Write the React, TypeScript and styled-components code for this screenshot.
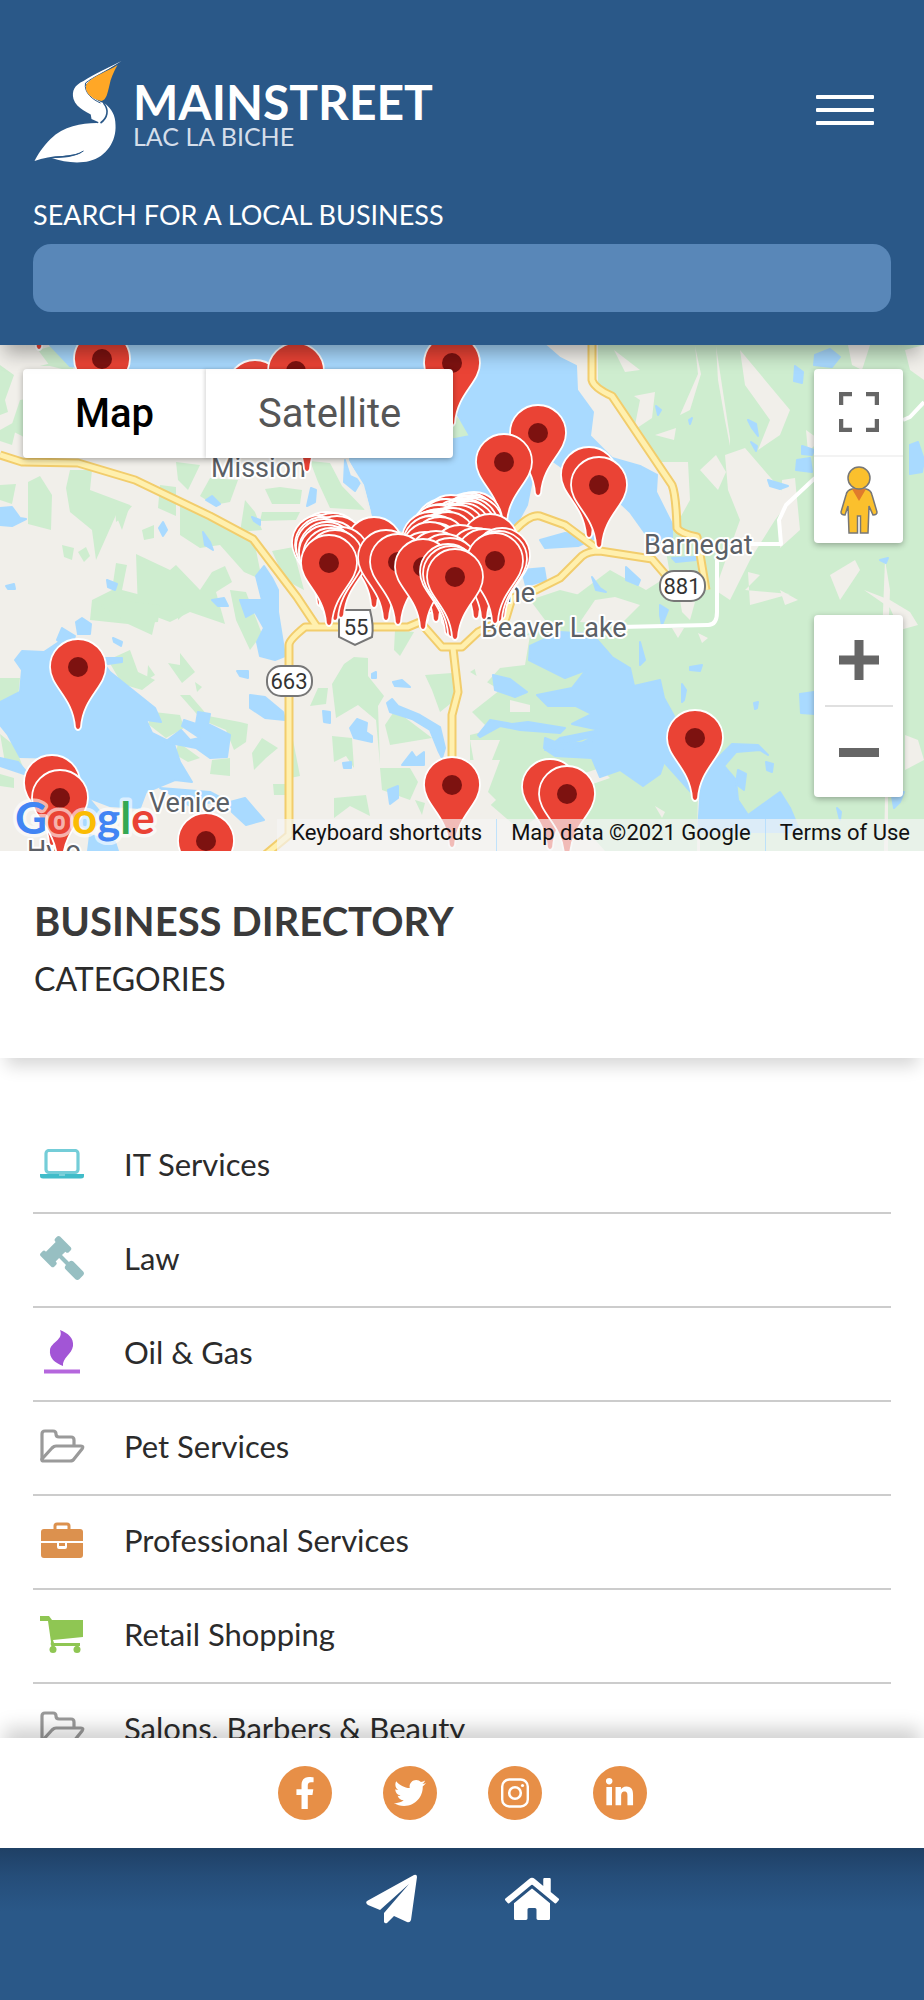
import React from "react";
import styled, { createGlobalStyle } from "styled-components";
import { FaFacebookF, FaGavel, FaHome, FaLinkedinIn, FaTwitter } from "react-icons/fa";

const colors = {
  navy: "#2a5888",
  field: "#5987b8",
  orange: "#e78f47",
  ink: "#2b2b2b",
  heading: "#3a3a3a",
  rule: "#cccccc",
};

const GlobalStyle = createGlobalStyle`
  *, *::before, *::after { box-sizing: border-box; }
  body { margin: 0; background: #ffffff; font-family: Lato, "Liberation Sans", sans-serif; color: ${colors.ink}; }
  button { font: inherit; color: inherit; border: 0; padding: 0; background: none; cursor: pointer; }
  a { color: inherit; text-decoration: none; }
`;

const Page = styled.div`
  height: 100vh;
  display: flex;
  flex-direction: column;
  overflow: hidden;
`;

/* ---------- header ---------- */

const Header = styled.header`
  position: relative;
  z-index: 2;
  flex: none;
  padding: 60px 33px 33px;
  background: ${colors.navy};
  box-shadow: 0 12px 18px -4px rgba(0, 0, 0, 0.32);
`;

const TopBar = styled.div`
  display: flex;
  align-items: flex-start;
  justify-content: space-between;
`;

const Brand = styled.a`
  display: flex;
  gap: 9px;
  color: #ffffff;
`;

const BrandText = styled.span`
  display: flex;
  flex-direction: column;
  padding-top: 18px;
`;

const BrandName = styled.span`
  font-size: 48px;
  line-height: 48px;
  font-weight: 700;
`;

const BrandPlace = styled.span`
  font-size: 25px;
  line-height: 20px;
  color: #d5deea;
`;

const MenuButton = styled.button`
  display: flex;
  flex-direction: column;
  gap: 9px;
  width: 58px;
  margin: 35px 17px 0 0;
`;

const MenuLine = styled.span`
  height: 4px;
  border-radius: 1px;
  background: #ffffff;
`;

const SearchLabel = styled.label`
  display: block;
  margin: 34px 0 12px;
  font-size: 27px;
  line-height: 34px;
  color: #ffffff;
`;

const SearchInput = styled.input`
  display: block;
  width: 100%;
  height: 68px;
  padding: 0 20px;
  border: 0;
  border-radius: 18px;
  background: ${colors.field};
  color: #ffffff;
  font: inherit;
  font-size: 27px;
`;

/* ---------- map ---------- */

const MapSection = styled.section`
  position: relative;
  flex: none;
  height: 506px;
  overflow: hidden;
  font-family: Roboto, "Liberation Sans", sans-serif;
`;

const MapCanvas = styled.svg`
  display: block;
  width: 100%;
  height: 100%;
`;

const MapTypes = styled.div`
  position: absolute;
  top: 24px;
  left: 23px;
  display: flex;
  height: 89px;
  border-radius: 4px;
  background: #ffffff;
  box-shadow: 0 2px 6px rgba(0, 0, 0, 0.3);
`;

const MapType = styled.button<{ $active?: boolean }>`
  padding: 0 52px;
  font-size: 40px;
  font-weight: ${(p) => (p.$active ? 500 : 400)};
  color: ${(p) => (p.$active ? "#000000" : "#565656")};
  & + & { box-shadow: -2px 0 3px rgba(0, 0, 0, 0.12); }
`;

const Controls = styled.div`
  position: absolute;
  top: 24px;
  right: 21px;
  display: flex;
  flex-direction: column;
  gap: 72px;
`;

const ControlGroup = styled.div`
  display: flex;
  flex-direction: column;
  align-items: center;
  width: 89px;
  border-radius: 4px;
  background: #ffffff;
  box-shadow: 0 2px 6px rgba(0, 0, 0, 0.3);
`;

const ControlButton = styled.button<{ $tall?: boolean }>`
  display: flex;
  align-items: center;
  justify-content: center;
  width: 100%;
  height: ${(p) => (p.$tall ? 90 : 86)}px;
`;

const ControlDivider = styled.span<{ $wide?: boolean }>`
  width: ${(p) => (p.$wide ? 89 : 68)}px;
  height: 2px;
  background: ${(p) => (p.$wide ? "#f3f3f3" : "#e0e0e0")};
`;

const Attribution = styled.div`
  position: absolute;
  right: 0;
  bottom: 0;
  display: flex;
  height: 32px;
  font-size: 22px;
  line-height: 28px;
  color: #111111;
`;

const AttributionItem = styled.span`
  display: flex;
  align-items: flex-start;
  padding: 0 14px;
  background: rgba(245, 245, 245, 0.68);
  white-space: nowrap;
  & + & { border-left: 1px solid rgba(169, 218, 255, 0.7); }
`;

/* ---------- directory ---------- */

const DirectoryHeading = styled.div`
  position: relative;
  z-index: 1;
  flex: none;
  padding: 44px 34px 59px;
  background: #ffffff;
  box-shadow: 0 14px 16px -6px rgba(0, 0, 0, 0.16);
`;

const Title = styled.h1`
  margin: 0;
  font-size: 40px;
  line-height: 52px;
  font-weight: 700;
  color: ${colors.heading};
`;

const Subtitle = styled.h2`
  margin: 12px 0 0;
  font-size: 32px;
  line-height: 40px;
  font-weight: 400;
`;

const Categories = styled.ul`
  flex: 1;
  min-height: 0;
  margin: 0;
  padding: 62px 33px 0;
  overflow-y: auto;
  scrollbar-width: none;
  list-style: none;
`;

const Category = styled.li`
  border-bottom: 2px solid ${colors.rule};
`;

const CategoryLink = styled.a`
  display: flex;
  align-items: center;
  gap: 34px;
  height: 92px;
  padding-bottom: 4px;
  font-size: 31px;
  line-height: 40px;
`;

const CategoryIcon = styled.span<{ $color: string }>`
  display: flex;
  justify-content: center;
  flex: none;
  width: 57px;
  color: ${(p) => p.$color};
`;

const MirroredGavel = styled(FaGavel)`
  transform: scaleX(-1);
`;

/* ---------- footer ---------- */

const Footer = styled.footer`
  position: relative;
  z-index: 1;
  flex: none;
`;

const SocialBar = styled.nav`
  display: flex;
  justify-content: center;
  gap: 51px;
  padding: 28px 0;
  background: #ffffff;
  box-shadow: 0 -14px 18px -4px rgba(0, 0, 0, 0.18);
`;

const SocialLink = styled.a`
  display: flex;
  align-items: center;
  justify-content: center;
  width: 54px;
  height: 54px;
  border-radius: 50%;
  background: ${colors.orange};
  color: #ffffff;
`;

const QuickBar = styled.nav`
  position: relative;
  display: flex;
  justify-content: center;
  gap: 84px;
  height: 152px;
  padding-top: 24px;
  background: linear-gradient(#1f4065, #254d79 28px, ${colors.navy} 64px);
  color: #ffffff;
`;

const QuickLink = styled.a`
  display: flex;
  align-items: center;
  width: 56px;
  height: 54px;
  justify-content: center;
`;

/* ---------- drawings ---------- */

const Pelican = () => (
  <svg width="91" height="104" viewBox="0 1 90 104" aria-hidden="true">
    <path
      fill="#ffffff"
      d="M88 2 C75 9 60 15 50 22 C41 26 38 32 40 40 C43 50 56 54 62 58 C66 61 66 65 63 64 C48 64 30 67 17 80 C9 88 4 96 1 102 C9 99 19 97 29 97 C38 96 44 95 49 93 C42 98 30 99 18 99 C30 103 44 105 56 102 C73 98 83 82 82 66 C82 56 78 50 72 45 C61 41 53 34 52 26 C60 18 73 12 88 2Z"
    />
    <path fill="#ffffff" d="M52 24 C51 34 60 41 67 44 C72 49 73 56 67 64 L58 60 Z" />
    <path fill="none" stroke={colors.navy} strokeWidth="1" d="M85 5 C73 12 60 18 52 24 C50 34 60 41 67 44" />
    <path fill="#ffa726" d="M84 6 C75 12 61 16 53 25 C50 33 58 40 68 42 C73 41 74 34 76 26 C77 20 80 13 84 6Z" />
    <path fill="none" stroke={colors.navy} strokeWidth="1.600" d="M70 44 C76 51 74 59 67 64" />
    <path fill="none" stroke={colors.navy} strokeWidth="1" d="M18 99 C30 97 40 98 50 92" />
  </svg>
);

const LaptopIcon = () => (
  <svg width="44" height="30" viewBox="0 0 44 30" aria-hidden="true">
    <rect x="6" y="1.500" width="32" height="22" rx="3" fill="none" stroke="#74cdd8" strokeWidth="3.200" />
    <path d="M0 25h44v2q0 2.500-3 2.500H3Q0 29.500 0 27Z" fill="#40bcc9" />
    <path d="M19 26h6" stroke="#b8e6eb" strokeWidth="1" />
  </svg>
);

const FlameIcon = () => (
  <svg width="38" height="44" viewBox="0 0 38 44" aria-hidden="true">
    <path
      fill="currentColor"
      d="M17 0 C25 3 31 8 30 16 C29 24 19 28 20 36 C12 33 6 28 7 20 C8 12 21 10 17 0Z"
    />
    <path d="M1 41.500h36" stroke="#b567dd" strokeWidth="4" />
  </svg>
);

const FolderIcon = () => (
  <svg width="46" height="34" viewBox="0 0 46 34" fill="none" stroke="currentColor" strokeWidth="3.200" strokeLinejoin="round" aria-hidden="true">
    <path d="M3 31V5q0-3 3-3h8q3 0 3 3t3 3h12q3 0 3 3v6" />
    <path d="M3 30 13 19q2-2 4-2h25q3 0 1 3l-8 10q-1 2-4 2H5q-3 0-2-2Z" />
  </svg>
);

const BriefcaseIcon = () => (
  <svg width="42" height="36" viewBox="0 0 42 36" aria-hidden="true">
    <path d="M14 8V4q0-2 2-2h10q2 0 2 2v4" fill="none" stroke="currentColor" strokeWidth="3" />
    <path d="M3 7h36q3 0 3 3v9H0v-9q0-3 3-3Z" fill="currentColor" />
    <path d="M0 21h16v4q0 2 2 2h6q2 0 2-2v-4h16v12q0 3-3 3H3q-3 0-3-3Z" fill="currentColor" />
    <path d="M18 21h6v3h-6Z" fill="currentColor" />
  </svg>
);

const CartIcon = () => (
  <svg width="44" height="37" viewBox="0 0 44 37" aria-hidden="true">
    <path d="M0 0h9l3 4h31v17L13 24l1 3h26v3H12q-2-1-1-4L8 5H0Z" fill="currentColor" />
    <circle cx="13" cy="33.500" r="3.500" fill="currentColor" />
    <circle cx="37" cy="33.500" r="3.500" fill="currentColor" />
    <path d="M13 27v5M37 28v5" stroke="currentColor" strokeWidth="3" />
  </svg>
);

const InstagramIcon = () => (
  <svg width="28" height="30" viewBox="0 0 28 30" fill="none" stroke="#ffffff" aria-hidden="true">
    <rect x="1.200" y="1.500" width="25.600" height="27" rx="7" strokeWidth="2.400" />
    <circle cx="14" cy="15" r="5.800" strokeWidth="2.600" />
    <circle cx="21.500" cy="7.500" r="1.600" fill="#ffffff" stroke="none" />
  </svg>
);

const PlaneIcon = () => (
  <svg width="52" height="50" viewBox="0 0 52 50" fill="#ffffff" aria-hidden="true">
    <path d="M1 27 48 1q3-1 3 2L45 46q-1 3-4 2L28 42l-7 7q-2 1-3-1V39L43 10 14 36 2 31q-3-2-1-4Z" />
  </svg>
);

const FullscreenIcon = () => (
  <svg width="40" height="40" viewBox="0 0 40 40" fill="none" stroke="#666666" strokeWidth="4.500" aria-hidden="true">
    <path d="M2 13V2h11M27 2h11v11M38 27v11H27M13 38H2V27" />
  </svg>
);

const PegmanIcon = () => (
  <svg width="38" height="68" viewBox="0 0 38 68" fill="#fbc02d" stroke="#777777" strokeWidth="1.500" aria-hidden="true">
    <path d="M12 23h14q5 1 6 6l5 17q0 3-4 3l-4-9-1 27H20.500V50h-3v17H9L8 40l-3 9q-4 0-4-3l5-17q1-5 6-6Z" />
    <path d="M12 23h14l-7 12Z" fill="#e07b2c" stroke="none" />
    <circle cx="19" cy="12" r="11" />
  </svg>
);

const PlusIcon = () => (
  <svg width="40" height="40" viewBox="0 0 40 40" aria-hidden="true">
    <path d="M15.500 0h9v15.500H40v9H24.500V40h-9V24.500H0v-9h15.500Z" fill="#666666" />
  </svg>
);

const MinusIcon = () => (
  <svg width="40" height="9" viewBox="0 0 40 9" aria-hidden="true">
    <path d="M0 0h40v9H0Z" fill="#666666" />
  </svg>
);

/* ---------- map data ---------- */

const WOODS = [
  "0,365 14,375 5,400 8,412 0,415", "38,350 52,346 70,352 74,372 50,366", "20,400 50,395 90,400 96,440 60,458 40,450 22,436 10,430",
  "0,430 18,420 12,445 0,441", "0,485 16,484 12,504 0,500", "28,482 40,476 52,495 51,530 28,524", "70,470 92,470 90,490 130,505 122,530 116,515 96,560 92,530 70,512 66,488",
  "115,502 132,506 124,516 116,522", "160,485 176,487 176,516 158,508", "176,462 200,465 188,490 178,480", "62,545 74,548 72,560 64,557",
  "78,552 86,547 90,556 84,562", "142,530 154,525 154,538 144,540", "116,563 127,565 122,590 160,600 152,635 128,624 90,620 92,600 112,590",
  "136,554 170,570 176,565 200,590 212,572 225,566 232,582 216,592 225,624 190,612 170,622 138,610", "180,500 200,510 235,530 255,545 262,580 244,572 220,545 200,548 180,535",
  "262,512 300,512 296,520 260,521", "265,489 280,487 302,490 300,504 272,504", "210,478 238,480 230,502 214,505 200,496", "310,461 330,463 342,486 365,510 330,508 318,482",
  "245,500 255,512 262,530 240,532", "272,551 305,545 296,560 304,590 285,580", "230,590 246,592 262,634 250,650 236,620", "0,678 20,678 18,698 0,702",
  "0,734 15,746 24,770 40,778 6,768", "0,774 14,778 14,788 0,786", "100,605 118,600 160,605 158,622 130,624", "108,660 130,650 138,672 155,680 142,690 122,684",
  "178,600 186,612 178,620", "168,663 180,665 180,653 195,672 182,683", "148,665 155,675 147,680", "195,682 202,687 197,692", "180,695 190,695 208,716 240,722 248,724 246,742 234,750 226,730 202,720",
  "154,712 180,715 184,728 166,738 148,724", "178,742 200,758 188,762 176,755", "212,760 230,758 230,776 210,774", "252,753 262,738 278,748 266,758 254,770", "273,784 290,784 290,795 274,795",
  "293,740 300,776 290,778", "344,664 354,657 368,658 368,676 384,696 378,706 380,765 376,720 358,705 336,718 332,684", "318,688 328,688 326,704 310,706",
  "332,736 352,738 354,768 346,756 334,762", "334,798 366,795 370,816 350,806 334,818", "395,630 414,632 400,656 394,650", "425,675 452,673 455,700 440,712 432,690",
  "385,725 395,710 432,738 390,745", "380,768 410,768 418,782 410,800 382,790", "415,800 425,803 422,815", "120,345 133,350 120,366 40,366",
  "380,425 400,440 440,440 455,415 480,440 470,460 450,448 390,450", "500,345 512,350 493,356 488,376 482,365 495,350",
  "598,345 924,345 924,851 605,851 560,800 520,830 485,800 500,760 470,760 470,735 490,730 472,712 500,690 470,672 520,640 570,600 610,570 646,590 670,575 665,545 690,500 688,462 658,462 625,420 598,385",
  "530,600 560,590 600,600 640,620 690,640 650,680 560,640", "515,550 530,560 520,570",
];

const CLEARINGS = [
  "614,350 640,370 625,372", "634,396 655,392 652,418 634,430 640,400", "655,435 676,428 674,440", "695,346 698,374 680,415 690,410 701,374", "716,346 730,438 730,446 725,420 718,380",
  "725,455 745,448 790,500 775,520 750,560 730,600 715,590 740,520 728,490", "740,350 790,410 780,435 758,450 770,420 745,385", "806,430 820,440 808,452", "782,480 795,478 800,530 780,548",
  "700,470 716,455 726,472 718,490", "748,572 760,575 745,590 790,594 750,605", "848,345 870,345 862,370 852,365", "905,350 924,345 924,380 910,370", "885,560 890,590 886,690 880,690",
  "864,590 890,600 910,612 918,625 900,630 890,608", "830,575 855,560 860,570 840,600", "780,590 798,600 785,605", "680,600 695,602 690,620 682,612", "672,628 684,628 678,638", "698,633 708,638 702,643",
  "510,700 530,705 530,712 510,712", "470,740 500,740 490,765 475,768", "585,773 600,768 610,778 590,785", "655,806 665,812 662,818", "653,740 664,745 663,765 655,770", "905,735 918,740 924,760 905,770",
  "470,650 500,640 530,635 525,665 500,668 480,690", "476,780 496,800 480,815", "885,797 888,797 888,851 884,851", "698,785 700,785 700,851 697,851", "595,600 615,597 640,605 620,625 580,622",
];

const WATERS = [
  "50,345 545,345 560,358 576,366 577,390 593,412 590,436 612,458 640,466 657,475 656,492 672,524 672,545 650,540 630,512 612,495 585,485 560,466 540,452 532,480 527,505 515,527 470,560 400,530 373,516 366,490 350,460 352,438 455,439 470,436 455,410 300,420 170,380 70,366",
  "0,702 20,692 22,670 15,660 22,651 44,652 62,640 90,645 110,672 135,692 155,708 161,722 146,720 152,733 166,740 174,744 180,762 192,782 175,780 146,792 140,808 110,806 84,796 62,758 20,757 8,735 0,725",
  "181,730 190,740 200,738 182,726 184,720 196,724 198,712 210,714 208,724 230,735 227,757 210,758 196,748 165,742",
  "57,640 62,628 75,636 70,650", "76,622 82,618 91,624 90,634 78,634", "113,638 122,642 121,646 114,642", "100,658 122,658 122,662 108,664",
  "0,508 12,507 20,518 26,519 12,526 0,525", "6,586 14,584 15,589 8,589", "107,580 117,584 115,590 108,587", "159,528 163,522 167,530 163,536", "203,532 210,542 213,550 205,545", "206,500 212,496 220,504 216,506",
  "252,517 260,520 260,525 254,521", "311,488 316,490 315,502 307,506", "345,460 350,476 361,481 355,491 344,482", "240,600 262,600 256,576 264,566 272,578 278,590 278,612 285,656 275,660 260,656 257,642 264,628 255,612 246,617",
  "212,600 224,598 228,606 218,606", "237,671 248,671 248,678 240,676", "250,695 265,697 283,712 285,720 265,718 250,708", "323,711 330,712 330,723 324,722", "350,728 357,719 367,723 366,732 372,736 372,742 354,738",
  "387,703 392,699 398,706 420,715 440,727 445,748 442,758 438,750 430,730 412,719 390,712", "388,790 398,786 398,798 390,804", "402,765 412,752 416,758 424,752 424,765", "343,763 351,762 351,768 344,768",
  "230,802 245,798 264,820 246,825 232,812", "160,788 210,792 225,800 190,806", "0,758 18,762 30,776 0,766", "60,806 90,800 105,818 90,830 70,820", "90,835 115,842 118,851 88,851", "372,674 376,672 376,678 372,678", "393,682 402,680 410,687 395,686",
  "529,660 530,646 560,632 592,634 612,657 630,668 634,686 660,680 664,698 674,716 676,738 690,752 696,772 697,799 682,782 664,762 660,774 643,786 620,770 600,777 592,758 555,756 546,750 580,744 596,735 545,750 560,738 600,730 572,724 592,714 576,706 548,706 537,695 572,688 586,670 565,678",
  "700,800 698,780 716,760 732,744 758,745 768,755 760,750 736,752 724,766 736,780 738,800 748,815 780,792 790,808 800,832 698,832",
  "493,675 510,679 527,692 515,697 495,690", "478,735 490,720 512,724 528,722 565,728 560,733 520,730 500,726 480,737", "545,738 560,744 592,742 560,752 544,748", "640,642 645,660 640,665", "690,667 702,665 700,671 690,670", "682,684 686,690 684,700 682,702",
  "540,540 565,533 600,536 578,546 545,548", "522,570 544,568 546,580 526,586", "626,567 640,580 638,585 626,580", "672,558 696,557 696,560 676,562", "592,577 600,588 606,592 596,590", "660,605 668,610 662,625 660,615",
  "815,355 830,349 840,357 832,367 814,365", "795,366 803,372 802,383 794,381", "656,406 661,410 658,415", "689,420 692,418 690,424", "748,420 756,424 758,436 752,428", "751,442 757,446 756,451", "802,446 814,450 812,455 802,454", "797,460 810,458 812,472 796,470",
  "768,480 788,486 780,489 770,486", "910,445 918,442 924,460 922,472 910,474", "800,694 814,692 815,714 801,713", "880,560 888,558 886,563", "892,796 904,792 900,802 894,808", "738,770 746,774 744,790 736,784", "766,762 773,764 772,772 767,770",
  "754,703 758,702 757,708 755,709", "837,808 841,812 840,820",
];

const ROADS = [
  "M0 455 22 462 78 463 135 480 210 516 253 539 297 597 317 627",
  "M265 855 289 835 289 645Q289 640 305 627H408L420 622 442 647H462L478 632 506 618 512 598 536 590 560 578 582 556Q588 551 600 551L652 559 670 580",
  "M515 530Q530 514 540 516L565 525 600 551",
  "M592 345V380Q594 388 612 396L672 485Q676 495 677 528 680 533 697 537L701 560 706 590",
  "M453 648 458 692 452 715V790",
];

const SCATTERED_PINS = [
  [39, 287], [102, 359], [307, 409], [255, 388], [296, 371], [452, 363], [538, 433], [504, 462], [589, 475], [599, 485],
  [78, 667], [52, 783], [60, 798], [206, 841], [452, 785], [550, 787], [567, 794], [695, 738],
];

const DOWNTOWN_PINS = Array.from({ length: 34 }, (_, i) => {
  const x = 430 + ((i * 17) % 46);
  const lift = Math.round(((470 - x) * (470 - x)) / 70);
  return [x, 517 + lift + ((i * 11) % 17)];
}).sort((a, b) => a[1] - b[1]);

const FRONT_PINS = [
  [490, 542], [326, 540], [320, 543], [333, 541], [323, 545], [337, 544], [324, 547], [332, 549], [327, 550], [374, 545], [341, 555], [327, 553], [331, 556], [335, 558],
  [430, 550], [460, 553], [476, 556], [484, 557], [425, 560], [386, 558], [436, 559], [445, 562], [450, 566], [398, 562], [329, 563],
  [502, 556], [499, 559], [495, 561], [423, 567], [448, 572], [451, 574], [455, 577],
];

const PINS = [...SCATTERED_PINS, ...DOWNTOWN_PINS, ...FRONT_PINS];

const Pin = ({ x, y }: { x: number; y: number }) => (
  <g transform={`translate(${x} ${y})`}>
    <path
      d="M-28 0A28 28 0 0 1 28 0C28 20 5 30 3 60Q2 63 0 63T-3 60C-5 30-28 20-28 0Z"
      fill="#ea4335"
      stroke="#ffffff"
      strokeWidth="1.800"
    />
    <circle r="10" fill="#7d1210" />
  </g>
);

const PlaceName = styled.text`
  font-size: 27px;
  fill: #5b6066;
  stroke: #ffffff;
  stroke-width: 4px;
  stroke-linejoin: round;
  paint-order: stroke;
`;

const RouteNumber = styled.text`
  font-size: 22px;
  fill: #333333;
  text-anchor: middle;
`;

const Watermark = styled.text`
  font-family: Lato, "Liberation Sans", sans-serif;
  font-size: 44px;
  font-weight: 700;
  stroke: rgba(255, 255, 255, 0.6);
  stroke-width: 7px;
  stroke-linejoin: round;
  paint-order: stroke;
`;

const LakeMap = () => (
  <MapCanvas viewBox="0 345 924 506" preserveAspectRatio="xMidYMid slice" role="img" aria-label="Map of businesses around Lac La Biche">
    <rect x="-600" y="345" width="2200" height="506" fill="#f1efea" />
    {WOODS.map((p) => <polygon key={p} points={p} fill="#ceedcf" />)}
    {CLEARINGS.map((p) => <polygon key={p} points={p} fill="#f1efea" />)}
    {WATERS.map((p) => <polygon key={p} points={p} fill="#a9daff" stroke="#a9daff" strokeWidth="2" strokeLinejoin="round" />)}
    <g fill="none" stroke="#ffffff" strokeWidth="4" strokeLinejoin="round">
      <path d="M717 560V612Q717 625 708 625L620 627M750 544H781L779 520 786 505 815 478M903 420 910 417 924 402" />
      <path d="M347 460 363 485 370 512" stroke="#eeeeea" strokeWidth="2" />
    </g>
    <g fill="none" strokeLinejoin="round">
      {ROADS.map((d) => <path key={d} d={d} stroke="#f2cd6c" strokeWidth="9" />)}
      {ROADS.map((d) => <path key={d} d={d} stroke="#fff0ae" strokeWidth="5" />)}
    </g>
    <PlaceName x="211" y="477">Mission</PlaceName>
    <PlaceName x="644" y="554">Barnegat</PlaceName>
    <PlaceName x="535" y="602" textAnchor="end">he</PlaceName>
    <PlaceName x="481" y="637">Beaver Lake</PlaceName>
    <PlaceName x="149" y="812">Venice</PlaceName>
    <PlaceName x="27" y="860">Hylo</PlaceName>
    <g fill="#ffffff" stroke="#777777" strokeWidth="2">
      <rect x="660" y="571" width="45" height="30" rx="14" />
      <rect x="267" y="666" width="45" height="30" rx="14" />
      <path d="M341 610H370Q374 626 372 637L355 645 339 637V612Z" />
    </g>
    <RouteNumber x="682" y="594">881</RouteNumber>
    <RouteNumber x="289" y="689">663</RouteNumber>
    <RouteNumber x="356" y="635">55</RouteNumber>
    {PINS.map(([x, y], i) => <Pin key={i} x={x} y={y} />)}
    <Watermark x="15" y="834">
      <tspan fill="#4285f4">G</tspan>
      <tspan fill="#ea4335">o</tspan>
      <tspan fill="#fbbc04">o</tspan>
      <tspan fill="#4285f4">g</tspan>
      <tspan fill="#34a853">l</tspan>
      <tspan fill="#ea4335">e</tspan>
    </Watermark>
  </MapCanvas>
);

const CATEGORIES = [
  { name: "IT Services", color: "#40bcc9", icon: <LaptopIcon /> },
  { name: "Law", color: "#97bfc2", icon: <MirroredGavel size={44} /> },
  { name: "Oil & Gas", color: "#a255d6", icon: <FlameIcon /> },
  { name: "Pet Services", color: "#9a9a9a", icon: <FolderIcon /> },
  { name: "Professional Services", color: "#dc914e", icon: <BriefcaseIcon /> },
  { name: "Retail Shopping", color: "#8fc653", icon: <CartIcon /> },
  { name: "Salons, Barbers & Beauty", color: "#9a9a9a", icon: <FolderIcon /> },
];

export default function App() {
  return (
    <Page>
      <GlobalStyle />
      <Header>
        <TopBar>
          <Brand href="#home">
            <Pelican />
            <BrandText>
              <BrandName>MAINSTREET</BrandName>
              <BrandPlace>LAC LA BICHE</BrandPlace>
            </BrandText>
          </Brand>
          <MenuButton type="button" aria-label="Menu">
            <MenuLine />
            <MenuLine />
            <MenuLine />
          </MenuButton>
        </TopBar>
        <SearchLabel htmlFor="search">SEARCH FOR A LOCAL BUSINESS</SearchLabel>
        <SearchInput id="search" type="text" />
      </Header>

      <MapSection>
        <LakeMap />
        <MapTypes>
          <MapType type="button" $active>Map</MapType>
          <MapType type="button">Satellite</MapType>
        </MapTypes>
        <Controls>
          <ControlGroup>
            <ControlButton type="button" aria-label="Toggle fullscreen"><FullscreenIcon /></ControlButton>
            <ControlDivider $wide />
            <ControlButton type="button" aria-label="Street View"><PegmanIcon /></ControlButton>
          </ControlGroup>
          <ControlGroup>
            <ControlButton type="button" $tall aria-label="Zoom in"><PlusIcon /></ControlButton>
            <ControlDivider />
            <ControlButton type="button" $tall aria-label="Zoom out"><MinusIcon /></ControlButton>
          </ControlGroup>
        </Controls>
        <Attribution>
          <AttributionItem as="button" type="button">Keyboard shortcuts</AttributionItem>
          <AttributionItem>Map data ©2021 Google</AttributionItem>
          <AttributionItem as="a" href="#terms">Terms of Use</AttributionItem>
        </Attribution>
      </MapSection>

      <DirectoryHeading>
        <Title>BUSINESS DIRECTORY</Title>
        <Subtitle>CATEGORIES</Subtitle>
      </DirectoryHeading>

      <Categories>
        {CATEGORIES.map((c) => (
          <Category key={c.name}>
            <CategoryLink href="#category">
              <CategoryIcon $color={c.color}>{c.icon}</CategoryIcon>
              {c.name}
            </CategoryLink>
          </Category>
        ))}
      </Categories>

      <Footer>
        <SocialBar aria-label="Social media">
          <SocialLink href="#facebook" aria-label="Facebook"><FaFacebookF size={32} /></SocialLink>
          <SocialLink href="#twitter" aria-label="Twitter"><FaTwitter size={32} /></SocialLink>
          <SocialLink href="#instagram" aria-label="Instagram"><InstagramIcon /></SocialLink>
          <SocialLink href="#linkedin" aria-label="LinkedIn"><FaLinkedinIn size={31} /></SocialLink>
        </SocialBar>
        <QuickBar aria-label="Quick links">
          <QuickLink href="#contact" aria-label="Contact"><PlaneIcon /></QuickLink>
          <QuickLink href="#home" aria-label="Home"><FaHome size={54} /></QuickLink>
        </QuickBar>
      </Footer>
    </Page>
  );
}
